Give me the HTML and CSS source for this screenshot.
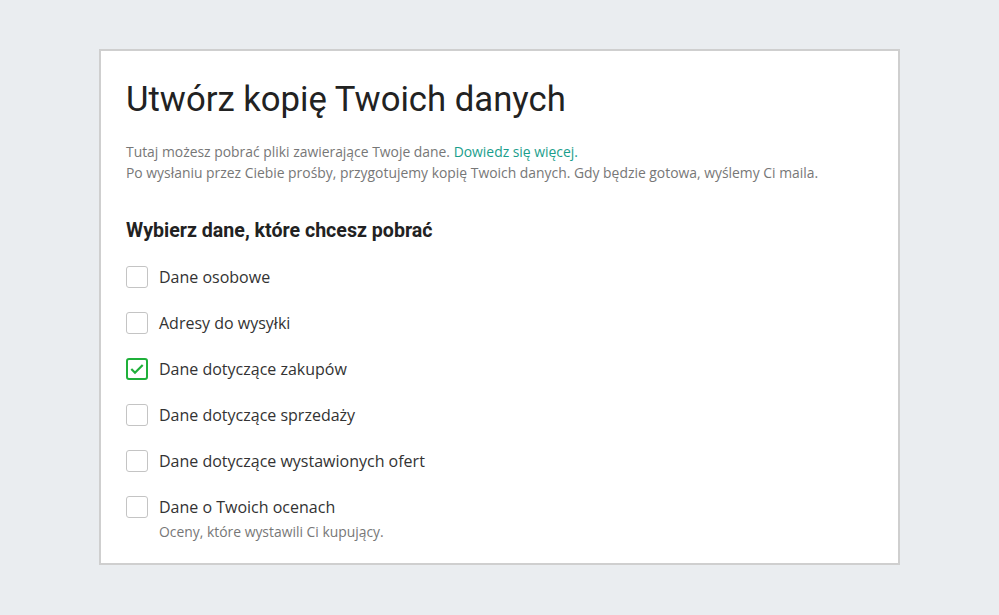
FILE: index.html
```html
<!DOCTYPE html>
<html lang="pl">

<head>
  <meta charset="UTF-8">
  <meta name="viewport" content="width=device-width, initial-scale=1.0">
  <title>Utwórz kopię Twoich danych</title>
  <link rel="stylesheet" href="styles.css">
</head>

<body>
  <div class="card">
    <h1 class="title">Utwórz kopię Twoich danych</h1>
    <p class="intro">
      Tutaj możesz pobrać pliki zawierające Twoje dane. <a href="#" class="link">Dowiedz się więcej.</a><br>
      Po wysłaniu przez Ciebie prośby, przygotujemy kopię Twoich danych. Gdy będzie gotowa, wyślemy Ci maila.
    </p>
    <h2 class="subtitle">Wybierz dane, które chcesz pobrać</h2>
    <ul class="options">
      <li class="option">
        <span class="box"></span>
        <span class="label">Dane osobowe</span>
      </li>
      <li class="option">
        <span class="box"></span>
        <span class="label">Adresy do wysyłki</span>
      </li>
      <li class="option">
        <span class="box checked">
          <svg width="14" height="12" viewBox="0 0 14 12">
            <path d="M1.3 6 L5 9.7 L12.7 2" fill="none" stroke="#1fb03a" stroke-width="2.2" />
          </svg>
        </span>
        <span class="label">Dane dotyczące zakupów</span>
      </li>
      <li class="option">
        <span class="box"></span>
        <span class="label">Dane dotyczące sprzedaży</span>
      </li>
      <li class="option">
        <span class="box"></span>
        <span class="label">Dane dotyczące wystawionych ofert</span>
      </li>
      <li class="option">
        <span class="box"></span>
        <span class="label">Dane o Twoich ocenach
          <span class="hint">Oceny, które wystawili Ci kupujący.</span>
        </span>
      </li>
    </ul>
  </div>
</body>

</html>
```

FILE: styles.css
```css
body {
  margin: 0;
  padding: 49px 0 0 99px;
  background: #eaedf0;
  font-family: "Open Sans", Arial, sans-serif;
}

.card {
  box-sizing: border-box;
  width: 801px;
  height: 516px;
  background: #fff;
  border: 2px solid #cfcfcf;
  padding: 28px 25px 0 25px;
}

.title {
  margin: 0;
  font-family: Roboto, Arial, sans-serif;
  font-weight: 400;
  font-size: 34.7px;
  line-height: 40px;
  color: #222;
}

.intro {
  margin: 22px 0 0 0;
  font-size: 13.9px;
  line-height: 21px;
  color: #777;
}

.link {
  color: #1a9e8c;
  text-decoration: none;
}

.subtitle {
  margin: 36px 0 0 0;
  font-family: Roboto, Arial, sans-serif;
  font-weight: 700;
  font-size: 19.6px;
  line-height: 24px;
  color: #222;
}

.options {
  list-style: none;
  margin: 23px 0 0 0;
  padding: 0;
}

.option {
  display: flex;
  align-items: flex-start;
  gap: 11px;
  margin-bottom: 24px;
}

.box {
  box-sizing: border-box;
  width: 22px;
  height: 22px;
  border: 1px solid #c4c4c4;
  border-radius: 3px;
  display: flex;
  align-items: center;
  justify-content: center;
  flex-shrink: 0;
}

.box.checked {
  border: 2px solid #1fb03a;
}

.label {
  font-size: 16px;
  line-height: 22px;
  color: #333;
}

.hint {
  display: block;
  margin-top: 5px;
  font-size: 13.9px;
  line-height: 18px;
  color: #777;
}
```
